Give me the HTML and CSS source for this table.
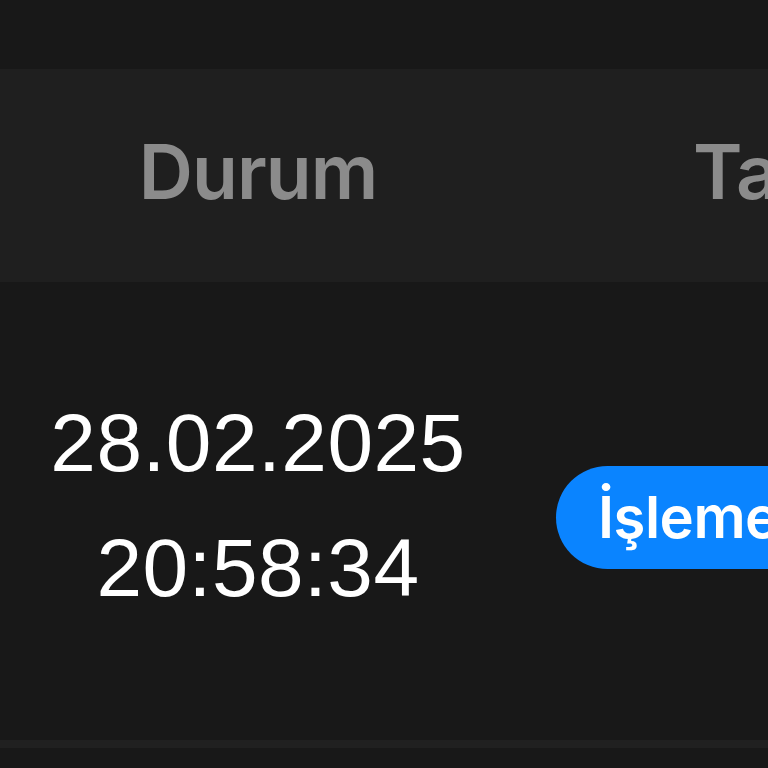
FILE: index.html
```html
<!DOCTYPE html>
<html lang="tr">
<head>
<meta charset="utf-8">
<link rel="stylesheet" href="styles.css">
</head>
<body>
<div class="page">
  <div class="spacer"></div>
  <div class="table">
    <div class="row head">
      <div class="cell c1"><span class="th">Durum</span></div>
      <div class="cell c2"><span class="th">Tarih</span></div>
    </div>
    <div class="row body">
      <div class="cell c1">
        <div class="datetime">
          <div>28.02.2025</div>
          <div>20:58:34</div>
        </div>
      </div>
      <div class="cell c2b">
        <span class="badge">İşlemede</span>
      </div>
    </div>
  </div>
</div>
</body>
</html>
```

FILE: styles.css
```css
html, body {
  margin: 0;
  padding: 0;
  background: #181818;
  overflow: hidden;
}
.page {
  width: 768px;
  height: 768px;
  overflow: hidden;
  display: flex;
  flex-direction: column;
}
.spacer {
  height: 69px;
  flex: none;
}
.table {
  display: flex;
  flex-direction: column;
}
.row {
  display: grid;
  grid-template-columns: 516px 1fr;
  white-space: nowrap;
}
.head {
  height: 213px;
  background: #1f1f1f;
  align-items: center;
}
.th {
  font-family: Inter, Lato, sans-serif;
  font-weight: 600;
  font-size: 75px;
  letter-spacing: -1px;
  color: #8b8b8b;
  line-height: 1;
  position: relative;
  top: -4px;
}
.c1 {
  display: flex;
  justify-content: center;
  align-items: center;
}
.c2 {
  padding-left: 177px;
}
.body {
  height: 458px;
  background: #181818;
  border-bottom: 8px solid #202020;
  align-items: center;
}
.datetime {
  font-family: "Liberation Sans", Arial, sans-serif;
  font-size: 82px;
  line-height: 125px;
  letter-spacing: 0.5px;
  color: #ffffff;
  text-align: center;
  margin-top: -12px;
}
.c2b {
  padding-left: 40px;
  display: flex;
  align-items: center;
}
.badge {
  display: inline-flex;
  align-items: center;
  height: 103px;
  padding: 0 42px;
  border-radius: 52px;
  background: #0a84ff;
  color: #ffffff;
  font-family: Inter, Lato, sans-serif;
  font-weight: 600;
  font-size: 58px;
  letter-spacing: -0.5px;
  margin-top: 12px;
}
```
